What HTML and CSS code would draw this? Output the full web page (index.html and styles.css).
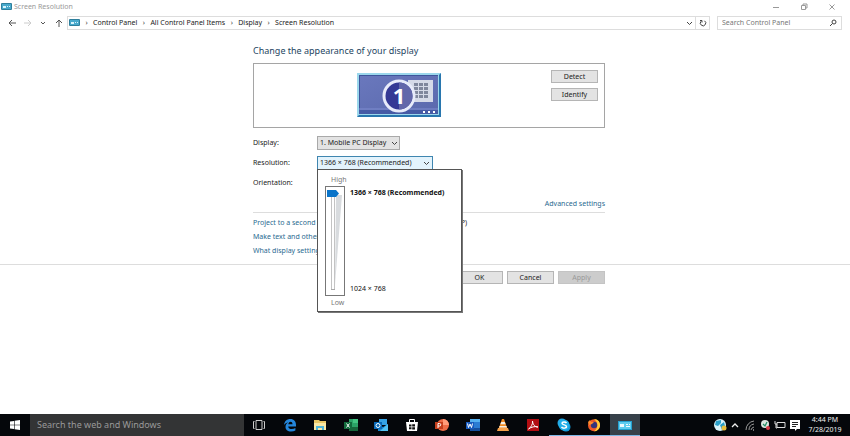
FILE: index.html
```html
<!DOCTYPE html>
<html lang="en">
<head>
<meta charset="utf-8">
<title>Screen Resolution</title>
<link rel="stylesheet" href="styles.css">
</head>
<body>
<svg class="defs" aria-hidden="true">
  <symbol id="panel" viewBox="0 0 11 8"><rect width="11" height="7" rx="1" fill="#2f7f9c"/><rect x="1" y="1" width="9" height="5" fill="#48a9cc"/><path d="M2 3h3v2H2zM6 3h1v1H6zM8 3h1v1H8zM6 5h3" fill="#d8f3fb"/></symbol>
  <symbol id="down" viewBox="0 0 7 5"><path d="M1 1l2.500 2.500L6 1" fill="none" stroke="currentColor"/></symbol>
</svg>
<header class="titlebar">
  <svg class="panel-icon"><use href="#panel"/></svg>
  <span class="title">Screen Resolution</span>
  <button class="win" aria-label="Minimize"><svg viewBox="0 0 8 8"><path d="M1 4.500h6"/></svg></button>
  <button class="win" aria-label="Restore"><svg viewBox="0 0 8 8"><path d="M1.500 2.500h4v4h-4zM3 2V1h4v4H6"/></svg></button>
  <button class="win" aria-label="Close"><svg viewBox="0 0 8 8"><path d="M1.500 1.500l5 5M6.500 1.500l-5 5"/></svg></button>
</header>
<nav class="navbar">
  <div class="arrows">
    <button aria-label="Back"><svg viewBox="0 0 8 8"><path d="M8 4H1M4 1L1 4l3 3"/></svg></button>
    <button aria-label="Forward" class="faint"><svg viewBox="0 0 8 8"><path d="M0 4h7M4 1l3 3-3 3"/></svg></button>
    <button aria-label="Recent locations"><svg viewBox="0 0 8 8"><path d="M2 3l2 2 2-2"/></svg></button>
    <button aria-label="Up"><svg viewBox="0 0 8 8"><path d="M4 8V1M1 4l3-3 3 3"/></svg></button>
  </div>
  <div class="address">
    <svg class="panel-icon"><use href="#panel"/></svg>
    <span class="sep">›</span><a href="#">Control Panel</a>
    <span class="sep">›</span><a href="#">All Control Panel Items</a>
    <span class="sep">›</span><a href="#">Display</a>
    <span class="sep">›</span><a href="#">Screen Resolution</a>
    <button class="history" aria-label="Previous locations"><svg class="chev"><use href="#down"/></svg></button>
    <button class="refresh" aria-label="Refresh"><svg viewBox="0 0 8 8"><path d="M5.500 1.800A2.700 2.700 0 1 1 2 2.300M1 1.500h2v2"/></svg></button>
  </div>
  <div class="search">
    <input type="text" aria-label="Search Control Panel" placeholder="Search Control Panel">
    <svg viewBox="0 0 8 8"><circle cx="5" cy="3" r="2"/><path d="M3.500 4.500L1 7"/></svg>
  </div>
</nav>
<main>
  <section class="content">
    <h1>Change the appearance of your display</h1>
    <div class="preview">
      <svg class="monitor" viewBox="0 0 86 46" role="img" aria-label="Display 1">
        <defs><linearGradient id="wall" x2="1" y2="1"><stop stop-color="#6a78bd"/><stop offset="1" stop-color="#5a69ad"/></linearGradient></defs>
        <rect x="1" y="1" width="84" height="44" fill="#9bd7ec"/>
        <path d="M85 1v44H1l2-2h80V3z" fill="#2876ae"/>
        <rect x="3" y="3" width="79" height="39" fill="url(#wall)"/>
        <path d="M3 3.500h79M3.500 3v39" stroke="#3e559b"/>
        <path d="M3 37h79" stroke="#7e8dd0"/><rect x="3" y="38" width="79" height="4" fill="#465aa5"/>
        <rect x="52" y="8" width="25" height="22" fill="#d5dae8"/>
        <path d="M60 11v16M65 11v16M70 11v16" stroke="#7f879d" stroke-width="4" stroke-dasharray="3 1"/>
        <circle cx="43" cy="24" r="15" fill="#343995" stroke="#e7ebfa" stroke-width="3"/>
        <path d="M43 10.500a13.500 13.500 0 0 1 0 27z" fill="#6267aa"/>
        <text x="43" y="32" class="numeral">1</text>
        <path d="M67 39h2v2h-2zM72 39h2v2h-2zM77 39h2v2h-2z" fill="#fff"/>
      </svg>
      <div class="preview-actions"><button class="btn">Detect</button><button class="btn">Identify</button></div>
    </div>
    <div class="fields">
      <label for="display">Display:</label>
      <div class="select"><select id="display"><option>1. Mobile PC Display</option></select><svg class="chev"><use href="#down"/></svg></div>
      <label for="resolution">Resolution:</label>
      <div class="combo">
        <button id="resolution" class="resolution" aria-expanded="true">1366 × 768 (Recommended)<svg class="chev"><use href="#down"/></svg></button>
        <div class="popup">
          <span class="end">High</span>
          <div class="scale">
            <div class="track">
              <svg class="wedge" viewBox="0 0 18 108" aria-hidden="true"><path d="M5.500 10v92M8.500 10v92" stroke="#c3c3c3" fill="none"/><path d="M10 8h6L9 98z" fill="#d8dbde"/><path d="M5 102.500h4" stroke="#aaa"/></svg>
              <input type="range" min="0" max="1" value="1" aria-label="Resolution">
            </div>
            <div class="marks"><strong>1366 × 768 (Recommended)</strong><span>1024 × 768</span></div>
          </div>
          <span class="end">Low</span>
        </div>
      </div>
      <span class="label">Orientation:</span>
    </div>
    <div class="advanced"><a href="#">Advanced settings</a></div>
    <ul class="links">
      <li><a href="#">Project to a second screen</a> (or press the Windows logo key <svg class="key" viewBox="0 0 8 8" aria-hidden="true"><path d="M0 1h3.500v2.500H0zM4 0h4v3.500H4zM0 4h3.500v3H0zM4 4h4v4H4z" fill="#222"/></svg> + P)</li>
      <li><a href="#">Make text and other items larger or smaller</a></li>
      <li><a href="#">What display settings should I choose?</a></li>
    </ul>
  </section>
  <footer><div class="footer-actions"><button class="btn">OK</button><button class="btn">Cancel</button><button class="btn" disabled>Apply</button></div></footer>
</main>
<div class="taskbar">
  <button class="start" aria-label="Start"><svg viewBox="0 0 12 12"><path d="M1 2.500l4-.6v3.800H1zM5.600 1.800L11 1v4.700H5.600zM1 6.300h4v3.800l-4-.6zM5.600 6.300H11V11l-5.400-.8z" fill="#fff"/></svg></button>
  <input class="cortana" type="text" aria-label="Search the web and Windows" placeholder="Search the web and Windows">
  <div class="apps">
    <button aria-label="Task view"><svg viewBox="0 0 14 14"><path d="M4 2.500h6v9H4zM2.500 3.500h-1v7h1M11.500 3.500h1v7h-1" fill="none" stroke="#ccc"/></svg></button>
    <button aria-label="Edge"><svg viewBox="0 0 14 14"><path d="M1 7C1.500 3 4 1 7.300 1 11 1 13 3.500 13 7v1.400H5.200c.2 2 1.700 2.600 3.500 2.600 1.300 0 2.600-.3 3.700-1v2.600c-1.200.6-2.500.9-4.200.9C4.500 13.500 2.500 11.500 2.500 9c0-2 1-3.600 2.700-4.400C3.500 4.800 2 5.700 1 7zm4.300-.8H9.500C9.500 4.500 8.700 3.700 7.500 3.700S5.500 4.600 5.300 6.200z" fill="#2486dc"/></svg></button>
    <button aria-label="File Explorer"><svg viewBox="0 0 14 14"><path d="M1 2h5l1 1h6v9H1z" fill="#e9c765"/><path d="M1 5h12v7H1z" fill="#fbe8a4"/><path d="M3 8h8v4H9v-2H5v2H3z" fill="#51b5d7"/></svg></button>
    <button aria-label="Excel"><svg viewBox="0 0 14 14"><path d="M5 1h9v12H5z" fill="#2ba367"/><path d="M9 1h5v4H9z" fill="#43c582"/><path d="M5 9h9v4H5z" fill="#17653b"/><path d="M0 4h8v7H0z" fill="#126a3c"/><path d="M2.500 5.500l3 4M5.500 5.500l-3 4" stroke="#fff"/></svg></button>
    <button aria-label="Outlook"><svg viewBox="0 0 14 14"><path d="M5 1h8v6H5z" fill="#35a3e5"/><path d="M4 6l5 3 5-3v7H4z" fill="#1686d1"/><path d="M14 6v7H6z" fill="#52c2f2"/><path d="M0 4h8v7H0z" fill="#0969b8"/><circle cx="4" cy="7.500" r="2" fill="none" stroke="#fff"/></svg></button>
    <button aria-label="Store"><svg viewBox="0 0 14 14"><path d="M1 4h12l-1 9H2z" fill="#fff"/><path d="M4.500 4V1.500h5V4" fill="none" stroke="#fff"/><path d="M4 6.500h2.500v2H4zM7.200 6.200H10v2.300H7.200zM4 9.200h2.500v2H4zM7.200 9.200H10v2.300H7.200z" fill="#111"/></svg></button>
    <button aria-label="PowerPoint"><svg viewBox="0 0 14 14"><circle cx="8" cy="7" r="6" fill="#ed6c47"/><path d="M8 1a6 6 0 0 1 6 6H8z" fill="#ff9b79"/><path d="M0 4h8v7H0z" fill="#c43e1c"/><path d="M3 10V5.500h1.500a1.200 1.200 0 0 1 0 2.500H3" fill="none" stroke="#fff"/></svg></button>
    <button aria-label="Word"><svg viewBox="0 0 14 14"><path d="M4 1h10v12H4z" fill="#2b7cd3"/><path d="M4 1h10v3H4z" fill="#55b0f0"/><path d="M4 10h10v3H4z" fill="#154e9c"/><path d="M0 4h8v7H0z" fill="#185abd"/><path d="M1.500 5.500l1 4L4 6l1.500 3.500 1-4" fill="none" stroke="#fff"/></svg></button>
    <button aria-label="VLC"><svg viewBox="0 0 14 14"><path d="M6 1h2l3.500 10h-9z" fill="#f18b22"/><path d="M5.200 4h3.600l.8 2.200H4.400zM3.500 8h7l.5 1.500H3z" fill="#f4eee4"/><path d="M2 10h10l1 3H1z" fill="#f5a04a"/></svg></button>
    <button aria-label="Acrobat Reader"><svg viewBox="0 0 14 14"><path d="M1 1h12v12H1z" fill="#b30d12"/><path d="M2.500 11C5 9.500 7 6 6.500 3 7 7 9 9 12 9 9 8 5 9 2.500 11z" fill="none" stroke="#fff"/></svg></button>
    <button class="running" aria-label="Skype"><svg viewBox="0 0 14 14"><circle cx="5" cy="5" r="4.500" fill="#24a9e6"/><circle cx="9" cy="9" r="4.500" fill="#1299d9"/><circle cx="7" cy="7" r="5.500" fill="#20aee9"/><path d="M9.500 5C8.500 3.500 5 3.500 5 5.300c0 2 4.500 1.200 4.500 3.300 0 2-4 2-5 .2" fill="none" stroke="#fff" stroke-width="1.500"/></svg></button>
    <button class="running" aria-label="Firefox"><svg viewBox="0 0 14 14"><circle cx="7" cy="7.300" r="6" fill="#f05a28"/><path d="M7 1c4 0 6.500 3 6 7-.5 3-3 5.300-6 5.300C10 11 11 8 10 5 9.500 3 8 2 7 1z" fill="#ffca3a"/><circle cx="7" cy="7" r="3.200" fill="#34347c"/><path d="M1 4l2-2 1 2h3L5 6l-3 1z" fill="#ff8a2b"/></svg></button>
    <button class="running active" aria-label="Screen Resolution"><svg viewBox="0 0 14 14"><path d="M0 3h14v9H0z" fill="#249fcf"/><path d="M1 4h12v7H1z" fill="#5fcdf0"/><path d="M2 6h4v3H2zM8 6h2v1H8zM11 6h1v1h-1zM8 8h4v1H8z" fill="#effbff"/></svg></button>
  </div>
  <div class="tray">
    <svg viewBox="0 0 14 14"><circle cx="7" cy="7" r="6" fill="#d9f3fa"/><path d="M3 3l5-1v3L5 8 2 7zM7 7l4-3 1 4-3 4z" fill="#2a9fc8"/><circle cx="11" cy="10" r="2.500" fill="#e7bd3d"/></svg>
    <svg viewBox="0 0 14 14"><path d="M4 9l3-3 3 3" fill="none" stroke="#eee" stroke-width="1.300"/></svg>
    <svg viewBox="0 0 14 14"><path d="M3 12A9 9 0 0 1 11 3M6 12a6 6 0 0 1 5-6M8 12a4 4 0 0 1 3-3" fill="none" stroke="#999"/><path d="M10 12h1" stroke="#eee"/></svg>
    <svg viewBox="0 0 14 14"><circle cx="7" cy="6" r="4" fill="#dce7e0"/><path d="M5 6l2 2 2-4" fill="none" stroke="#248f66" stroke-width="1.300"/><circle cx="10" cy="10" r="2" fill="#d83b46"/></svg>
    <svg viewBox="0 0 14 14"><path d="M4 4.500h8v5H4zM2 3v3h2M3 6v4h1" fill="none" stroke="#ddd"/></svg>
    <svg viewBox="0 0 14 14"><path d="M2 2h10v9H9l-2 2v-2H2z" fill="#fff"/><path d="M4 4.500h6M4 6.500h6M4 8.500h4" stroke="#222"/></svg>
  </div>
  <div class="clock"><span>4:44 PM</span><span>7/28/2019</span></div>
</div>
</body>
</html>
```
FILE: styles.css
```css
* { box-sizing: border-box; }
body {
  margin: 0;
  min-height: 100vh;
  display: flex;
  flex-direction: column;
  background: #fff;
  color: #222;
  font: 7px/10px "Noto Sans", "Open Sans", sans-serif;
}
button, input, select { font: inherit; color: inherit; margin: 0; padding: 0; border: 0; background: none; border-radius: 0; }
a { color: #2a6a90; text-decoration: none; }
.defs { position: absolute; width: 0; height: 0; }
.panel-icon { width: 11px; height: 8px; flex: none; }
.chev { width: 7px; height: 5px; flex: none; color: #444; }

.titlebar { display: flex; align-items: center; height: 13px; padding: 0 4px 0 1px; }
.title { flex: 1; margin-left: 2px; color: #999; }
.win { width: 28px; height: 12px; display: grid; place-items: center; }
.win svg { width: 8px; height: 8px; fill: none; stroke: #999; }

.navbar { display: flex; align-items: center; height: 20px; padding: 0 8px 0 4px; }
.arrows { display: flex; width: 63px; flex: none; }
.arrows button { width: 16px; height: 12px; display: grid; place-items: center; }
.arrows svg { width: 8px; height: 8px; fill: none; stroke: #555; }
.arrows .faint svg { stroke: #ccc; }
.address { flex: 1; display: flex; align-items: center; height: 14px; padding-left: 1px; border: 1px solid #ddd; }
.address a { color: #222; }
.sep { width: 13px; text-align: center; color: #444; }
.history { margin-left: auto; width: 12px; display: grid; place-items: center; }
.refresh { width: 14px; height: 12px; display: grid; place-items: center; border-left: 1px solid #ddd; }
.refresh svg, .search svg { width: 8px; height: 8px; fill: none; stroke: #444; }
.search { display: flex; align-items: center; width: 125px; height: 14px; margin-left: 7px; padding: 0 4px; border: 1px solid #ddd; }
.search input { flex: 1; min-width: 0; outline: 0; }
.search ::placeholder { color: #777; opacity: 1; }

main { flex: 1; }
.content, .footer-actions { width: 360px; margin: 0 auto; padding-left: 8px; }
.content { padding-top: 11px; }
h1 { margin: 0 0 5px; font-size: 9px; line-height: 14px; font-weight: 400; color: #24455f; }
.preview { display: flex; align-items: flex-start; height: 65px; padding: 6px 6px 0 102px; border: 1px solid #a5a5a5; }
.monitor { width: 86px; height: 46px; margin-top: 2px; }
.numeral { font: bold 22px "Open Sans", sans-serif; fill: #fff; text-anchor: middle; }
.preview-actions { display: flex; flex-direction: column; gap: 5px; margin-left: auto; }
.btn { width: 47px; height: 13px; border: 1px solid #b5b5b5; background: #e3e3e3; line-height: 10px; }
.btn:disabled { background: #ccc; border-color: #c4c4c4; color: #999; }

.fields { display: grid; grid-template-columns: 64px 1fr; grid-auto-rows: 14px; row-gap: 6px; align-items: center; margin-top: 8px; }
.select { position: relative; width: 83px; }
.select select { display: block; width: 100%; height: 14px; padding-left: 2px; appearance: none; border: 1px solid #a9a9a9; background: #e3e3e3; }
.select .chev { position: absolute; right: 2px; top: 5px; pointer-events: none; }
.combo { position: relative; width: 116px; }
.resolution { display: flex; align-items: center; justify-content: space-between; width: 100%; height: 14px; padding: 0 2px; border: 1px solid #3f86b0; background: #e3f3fc; }
.popup { position: absolute; z-index: 1; top: 13px; left: 0; width: 145px; padding: 5px 7px 3px; background: #fff; border: 1px solid #555; box-shadow: 1px 1px 0 #777; }
.end { display: block; padding-left: 6px; line-height: 10px; color: #777; }
.scale { display: flex; gap: 5px; margin: 1px 0 2px; }
.track { position: relative; width: 20px; height: 110px; border: 1px solid #777; }
.wedge { display: block; width: 18px; height: 108px; }
.track input { position: absolute; left: 1px; top: 3px; width: 12px; height: 102px; appearance: none; writing-mode: vertical-lr; direction: rtl; }
.track input::-webkit-slider-thumb { appearance: none; width: 12px; height: 7px; background: #0a74c9; clip-path: polygon(0 0, 75% 0, 100% 50%, 75% 100%, 0 100%); }
.marks { display: flex; flex-direction: column; justify-content: space-between; padding: 2px 0; color: #111; white-space: nowrap; }

.advanced { margin-top: 9px; padding-bottom: 3px; border-bottom: 1px solid #ddd; text-align: right; }
.links { list-style: none; margin: 3px 0 0; padding: 0; line-height: 14px; }
.key { width: 8px; height: 8px; vertical-align: middle; }
footer { margin-top: 6px; padding-top: 6px; border-top: 1px solid #ddd; }
.footer-actions { display: flex; justify-content: flex-end; gap: 4px; }

.taskbar { display: flex; align-items: stretch; height: 22px; background: #05070b; color: #ddd; }
.start { width: 30px; display: grid; place-items: center; }
.start svg { width: 12px; height: 12px; }
.cortana { width: 214px; padding-left: 7px; background: #333435; font-size: 9px; outline: 0; }
.cortana::placeholder { color: #999; opacity: 1; }
.apps { display: flex; width: 396px; }
.apps button { flex: 1; display: grid; place-items: center; border-bottom: 1px solid transparent; }
.apps svg { width: 14px; height: 14px; }
.apps .running { border-bottom-color: #7cb7e6; }
.apps .active { background: #37414a; }
.tray { display: flex; align-items: center; gap: 1px; margin-left: auto; }
.tray svg { width: 14px; height: 14px; }
.clock { display: flex; flex-direction: column; justify-content: center; align-items: center; width: 34px; margin: 0 8px 0 6px; color: #eee; }
```
